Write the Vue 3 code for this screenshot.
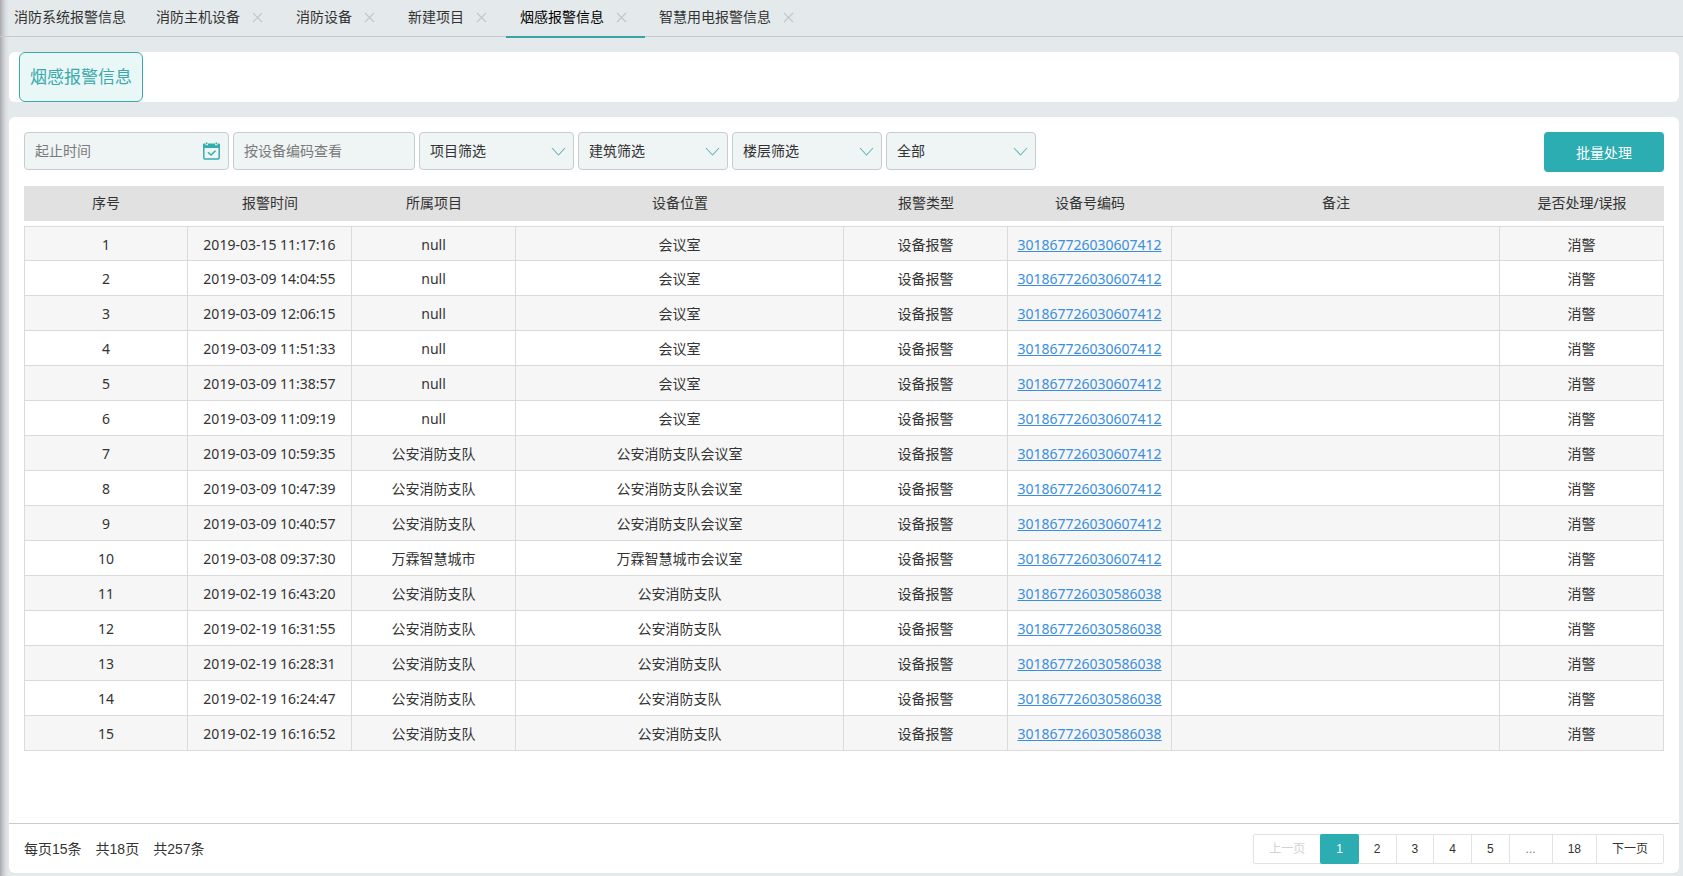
<script setup>
import { ref } from 'vue'

const tabs = [
  { name: '消防系统报警信息', fixed: true },
  { name: '消防主机设备' },
  { name: '消防设备' },
  { name: '新建项目' },
  { name: '烟感报警信息' },
  { name: '智慧用电报警信息' },
]
const activeTab = ref('烟感报警信息')

const filters = [
  { id: 'project', label: '项目筛选', wide: true },
  { id: 'building', label: '建筑筛选' },
  { id: 'floor', label: '楼层筛选' },
  { id: 'status', label: '全部' },
]

const columns = [
  { title: '序号' },
  { title: '报警时间' },
  { title: '所属项目' },
  { title: '设备位置', wide: true },
  { title: '报警类型' },
  { title: '设备号编码' },
  { title: '备注', wide: true },
  { title: '是否处理/误报' },
]

const codeA = '301867726030607412'
const codeB = '301867726030586038'
const rows = [
  ['2019-03-15 11:17:16', 'null', '会议室', codeA],
  ['2019-03-09 14:04:55', 'null', '会议室', codeA],
  ['2019-03-09 12:06:15', 'null', '会议室', codeA],
  ['2019-03-09 11:51:33', 'null', '会议室', codeA],
  ['2019-03-09 11:38:57', 'null', '会议室', codeA],
  ['2019-03-09 11:09:19', 'null', '会议室', codeA],
  ['2019-03-09 10:59:35', '公安消防支队', '公安消防支队会议室', codeA],
  ['2019-03-09 10:47:39', '公安消防支队', '公安消防支队会议室', codeA],
  ['2019-03-09 10:40:57', '公安消防支队', '公安消防支队会议室', codeA],
  ['2019-03-08 09:37:30', '万霖智慧城市', '万霖智慧城市会议室', codeA],
  ['2019-02-19 16:43:20', '公安消防支队', '公安消防支队', codeB],
  ['2019-02-19 16:31:55', '公安消防支队', '公安消防支队', codeB],
  ['2019-02-19 16:28:31', '公安消防支队', '公安消防支队', codeB],
  ['2019-02-19 16:24:47', '公安消防支队', '公安消防支队', codeB],
  ['2019-02-19 16:16:52', '公安消防支队', '公安消防支队', codeB],
]

const pages = ['1', '2', '3', '4', '5', '...', '18']
const currentPage = ref('1')
</script>

<template>
  <div class="page">
    <nav class="tabs">
      <div
        v-for="tab in tabs"
        :key="tab.name"
        class="tab"
        :class="{ active: tab.name === activeTab, fixed: tab.fixed }"
      >
        <button class="tab-name" type="button" @click="activeTab = tab.name">{{ tab.name }}</button>
        <button v-if="!tab.fixed" class="tab-close" type="button" :aria-label="'关闭' + tab.name">
          <svg width="11" height="11" viewBox="0 0 11 11"><path d="M1 1l9 9M10 1l-9 9" /></svg>
        </button>
      </div>
    </nav>

    <header class="panel heading">
      <h1 class="title">烟感报警信息</h1>
    </header>

    <main class="panel content">
      <form class="filters" @submit.prevent>
        <div class="field date">
          <input type="text" placeholder="起止时间" aria-label="起止时间" />
          <svg class="calendar" width="17" height="18" viewBox="0 0 17 18">
            <path class="solid" d="M0 2.5Q0 1.5 1 1.5H2.5V3.2H5V1.5H12V3.2H14.5V1.5H16Q17 1.5 17 2.5V6H0Z" />
            <path class="line" d="M0.8 5V15.7Q0.8 16.9 2 16.9H15Q16.2 16.9 16.2 15.7V5" />
            <path class="line" d="M3.7 0.5V2.3M13.3 0.5V2.3" />
            <path class="line" d="M5 10.3L8 13L12.5 8.7" />
          </svg>
        </div>
        <div class="field code">
          <input type="text" placeholder="按设备编码查看" aria-label="按设备编码查看" />
        </div>
        <div v-for="f in filters" :key="f.id" class="field pick" :class="{ wide: f.wide }">
          <select :id="f.id" :aria-label="f.label">
            <option>{{ f.label }}</option>
          </select>
          <svg class="chevron" width="15" height="9" viewBox="0 0 15 9"><path d="M1 1l6.5 7L14 1" /></svg>
        </div>
        <button class="batch" type="button">批量处理</button>
      </form>

      <table class="alarms">
        <colgroup>
          <col v-for="c in columns" :key="c.title" :class="{ wide: c.wide }" />
        </colgroup>
        <thead>
          <tr>
            <th v-for="c in columns" :key="c.title" scope="col">{{ c.title }}</th>
          </tr>
        </thead>
        <tbody>
          <tr v-for="(row, i) in rows" :key="row[0]">
            <td>{{ i + 1 }}</td>
            <td>{{ row[0] }}</td>
            <td>{{ row[1] }}</td>
            <td>{{ row[2] }}</td>
            <td>设备报警</td>
            <td><a href="#">{{ row[3] }}</a></td>
            <td></td>
            <td>消警</td>
          </tr>
        </tbody>
      </table>

      <footer class="footer">
        <p class="totals"><span>每页15条</span><span>共18页</span><span>共257条</span></p>
        <div class="pager">
          <button class="step" type="button" disabled>上一页</button>
          <template v-for="p in pages" :key="p">
            <span v-if="p === '...'" class="more">{{ p }}</span>
            <button v-else type="button" :class="{ current: p === currentPage }" @click="currentPage = p">{{ p }}</button>
          </template>
          <button class="step" type="button">下一页</button>
        </div>
      </footer>
    </main>
  </div>
</template>

<style>
body {
  margin: 0;
  background: #e4e9eb;
}
</style>

<style scoped>
.page {
  box-sizing: border-box;
  min-height: 100vh;
  display: flex;
  flex-direction: column;
  padding-bottom: 3px;
  background: linear-gradient(to right, #a9a9ad 0, #c6c8cb 3px, #dcdfe3 6px, #e4e9eb 9px);
  color: #333;
  font-family: "Noto Sans", "Noto Sans CJK SC", sans-serif;
  font-size: 14px;
}

button,
input,
select {
  font: inherit;
  color: inherit;
}

button {
  padding: 0;
  border: 0;
  background: none;
  cursor: pointer;
}

.tabs {
  display: flex;
  height: 36px;
  border-bottom: 1px solid #c3c9cc;
  font-family: "Noto Sans CJK SC", sans-serif;
}

.tab {
  box-sizing: border-box;
  display: flex;
  align-items: center;
  height: 38px;
  padding: 0 19px 6px 14px;
  gap: 12px;
}

.tab.fixed {
  padding-right: 16px;
}

.tab.active {
  padding-right: 18px;
  padding-bottom: 4px;
  border-bottom: 2px solid #3ba3a5;
  color: #000;
}

.tab-name {
  line-height: 20px;
}

.tab-close {
  display: flex;
  padding-top: 2px;
}

.tab-close path {
  fill: none;
  stroke: #c3c7c9;
  stroke-width: 1.2;
}

.panel {
  margin: 15px 4px 0 9px;
  border-radius: 6px;
  background: #fff;
}

.heading {
  display: flex;
  padding-left: 10px;
}

.title {
  margin: 0;
  padding: 0 10px 2px;
  border: 1px solid #3ba9ab;
  border-radius: 6px;
  background: #e9f7f7;
  color: #3ba9ab;
  font-family: "Noto Sans CJK SC", sans-serif;
  font-size: 17px;
  font-weight: 400;
  line-height: 46px;
}

.content {
  flex: 1;
  display: flex;
  flex-direction: column;
}

.filters {
  display: flex;
  align-items: flex-start;
  gap: 4px;
  padding: 15px 15px 14px;
  font-family: "Noto Sans CJK SC", sans-serif;
}

.field {
  display: grid;
  align-items: center;
  width: 150px;
  height: 38px;
}

.field.date {
  width: 205px;
}

.field.code {
  width: 182px;
}

.field.wide {
  width: 155px;
}

.field > * {
  grid-area: 1 / 1;
}

.field input,
.field select {
  box-sizing: border-box;
  width: 100%;
  height: 38px;
  padding: 0 10px 2px;
  border: 1px solid #c8cccc;
  border-radius: 4px;
  background: #eff4f5;
  appearance: none;
  outline: none;
}

.field input::placeholder {
  color: #7a7a7a;
  opacity: 1;
}

.calendar,
.chevron {
  justify-self: end;
  margin-right: 9px;
  pointer-events: none;
}

.chevron {
  margin-right: 8px;
}

.calendar .solid {
  fill: #34adb0;
}

.calendar .line {
  fill: none;
  stroke: #34adb0;
  stroke-width: 1.5;
}

.chevron path {
  fill: none;
  stroke: #62b9b6;
  stroke-width: 1.1;
}

.batch {
  width: 120px;
  height: 40px;
  margin-left: auto;
  border-radius: 4px;
  background: #2badb1;
  color: #fff;
}

.alarms {
  margin: 0 15px;
  table-layout: fixed;
  border-collapse: separate;
  border-spacing: 0;
  text-align: center;
}

.alarms col {
  width: 10%;
}

.alarms col.wide {
  width: 20%;
}

.alarms th,
.alarms td {
  box-sizing: border-box;
  height: 35px;
  padding: 2px 0 0;
  line-height: 20px;
}

.alarms th {
  padding: 0 0 2px;
  background: #e1e1e1;
  font-weight: 400;
}

.alarms tbody::before {
  content: "";
  display: block;
  height: 5px;
}

.alarms td {
  border: solid #dadada;
  border-width: 0 1px 1px 0;
}

.alarms td:first-child {
  border-left-width: 1px;
}

.alarms tbody tr:first-child td {
  border-top-width: 1px;
}

.alarms tbody tr:nth-child(odd) {
  background: #f6f6f6;
}

.alarms a {
  color: #3a8ee0;
}

.footer {
  display: flex;
  align-items: center;
  justify-content: space-between;
  margin-top: auto;
  padding: 10px 15px 9px;
  border-top: 1px solid #c9cccd;
  font-family: "Liberation Sans", "Noto Sans CJK SC", sans-serif;
}

.totals {
  display: flex;
  gap: 14px;
  margin: 0;
  padding-bottom: 2px;
}

.pager {
  display: flex;
  border: 1px solid #e2e2e2;
  border-radius: 2px;
  font-size: 12px;
  line-height: 28px;
}

.pager > * {
  padding: 0 15px;
  border-right: 1px solid #e2e2e2;
}

.pager > :last-child {
  border-right: 0;
}

.pager .more {
  padding: 0 16px;
  color: #777;
}

.pager .step:disabled {
  color: #d2d2d2;
  cursor: default;
}

.pager .current {
  margin: -1px 0 -1px -1px;
  padding: 0 16px;
  border-right: 0;
  border-radius: 2px;
  background: #2badb1;
  color: #fff;
}
</style>
